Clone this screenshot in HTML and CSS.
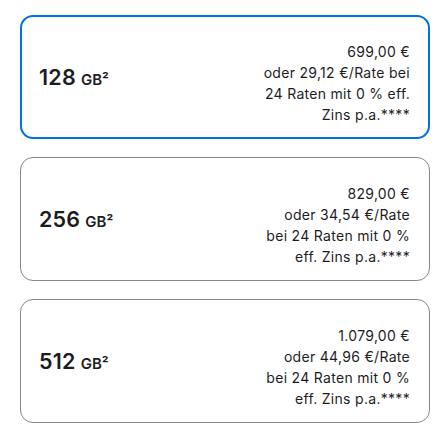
FILE: index.html
```html
<!DOCTYPE html>
<html lang="de">
<head>
<meta charset="utf-8">
<title>Speicher</title>
<link rel="stylesheet" href="styles.css">
</head>
<body>
<div class="options">
  <div class="card selected">
    <div class="capacity"><span class="num">128</span> <span class="unit">GB²</span></div>
    <div class="price">
      <span class="line">699,00 €</span>
      <span class="line">oder 29,12 €/Rate bei</span>
      <span class="line">24 Raten mit 0 % eff.</span>
      <span class="line">Zins p.a.****</span>
    </div>
  </div>
  <div class="card">
    <div class="capacity"><span class="num">256</span> <span class="unit">GB²</span></div>
    <div class="price">
      <span class="line">829,00 €</span>
      <span class="line">oder 34,54 €/Rate</span>
      <span class="line">bei 24 Raten mit 0 %</span>
      <span class="line">eff. Zins p.a.****</span>
    </div>
  </div>
  <div class="card">
    <div class="capacity"><span class="num">512</span> <span class="unit">GB²</span></div>
    <div class="price">
      <span class="line">1.079,00 €</span>
      <span class="line">oder 44,96 €/Rate</span>
      <span class="line">bei 24 Raten mit 0 %</span>
      <span class="line">eff. Zins p.a.****</span>
    </div>
  </div>
</div>
</body>
</html>
```
FILE: styles.css
```css
html, body {
  margin: 0;
  padding: 0;
  background: #ffffff;
}

body {
  font-family: Inter, "Liberation Sans", Arial, sans-serif;
  color: #1d1d1f;
}

.options {
  display: flex;
  flex-direction: column;
  gap: 18px;
  padding: 15px 10px 0 20px;
}

.card {
  box-sizing: border-box;
  height: 124px;
  border: 1px solid #86868b;
  border-radius: 13px;
  padding: 0 19px 0 18px;
  display: flex;
  align-items: center;
  justify-content: space-between;
}

.card.selected {
  border: 2px solid #0071e3;
  padding: 0 18px 0 17px;
}

.capacity {
  font-weight: 600;
  white-space: nowrap;
}

.capacity .num {
  font-size: 21.5px;
  letter-spacing: 0.01em;
}

.capacity .unit {
  font-size: 15px;
  margin-left: 1px;
}

.price {
  padding-top: 11px;
  text-align: right;
  font-size: 14px;
  line-height: 21px;
  letter-spacing: 0.3px;
}

.price .line {
  display: block;
  white-space: nowrap;
}
```
